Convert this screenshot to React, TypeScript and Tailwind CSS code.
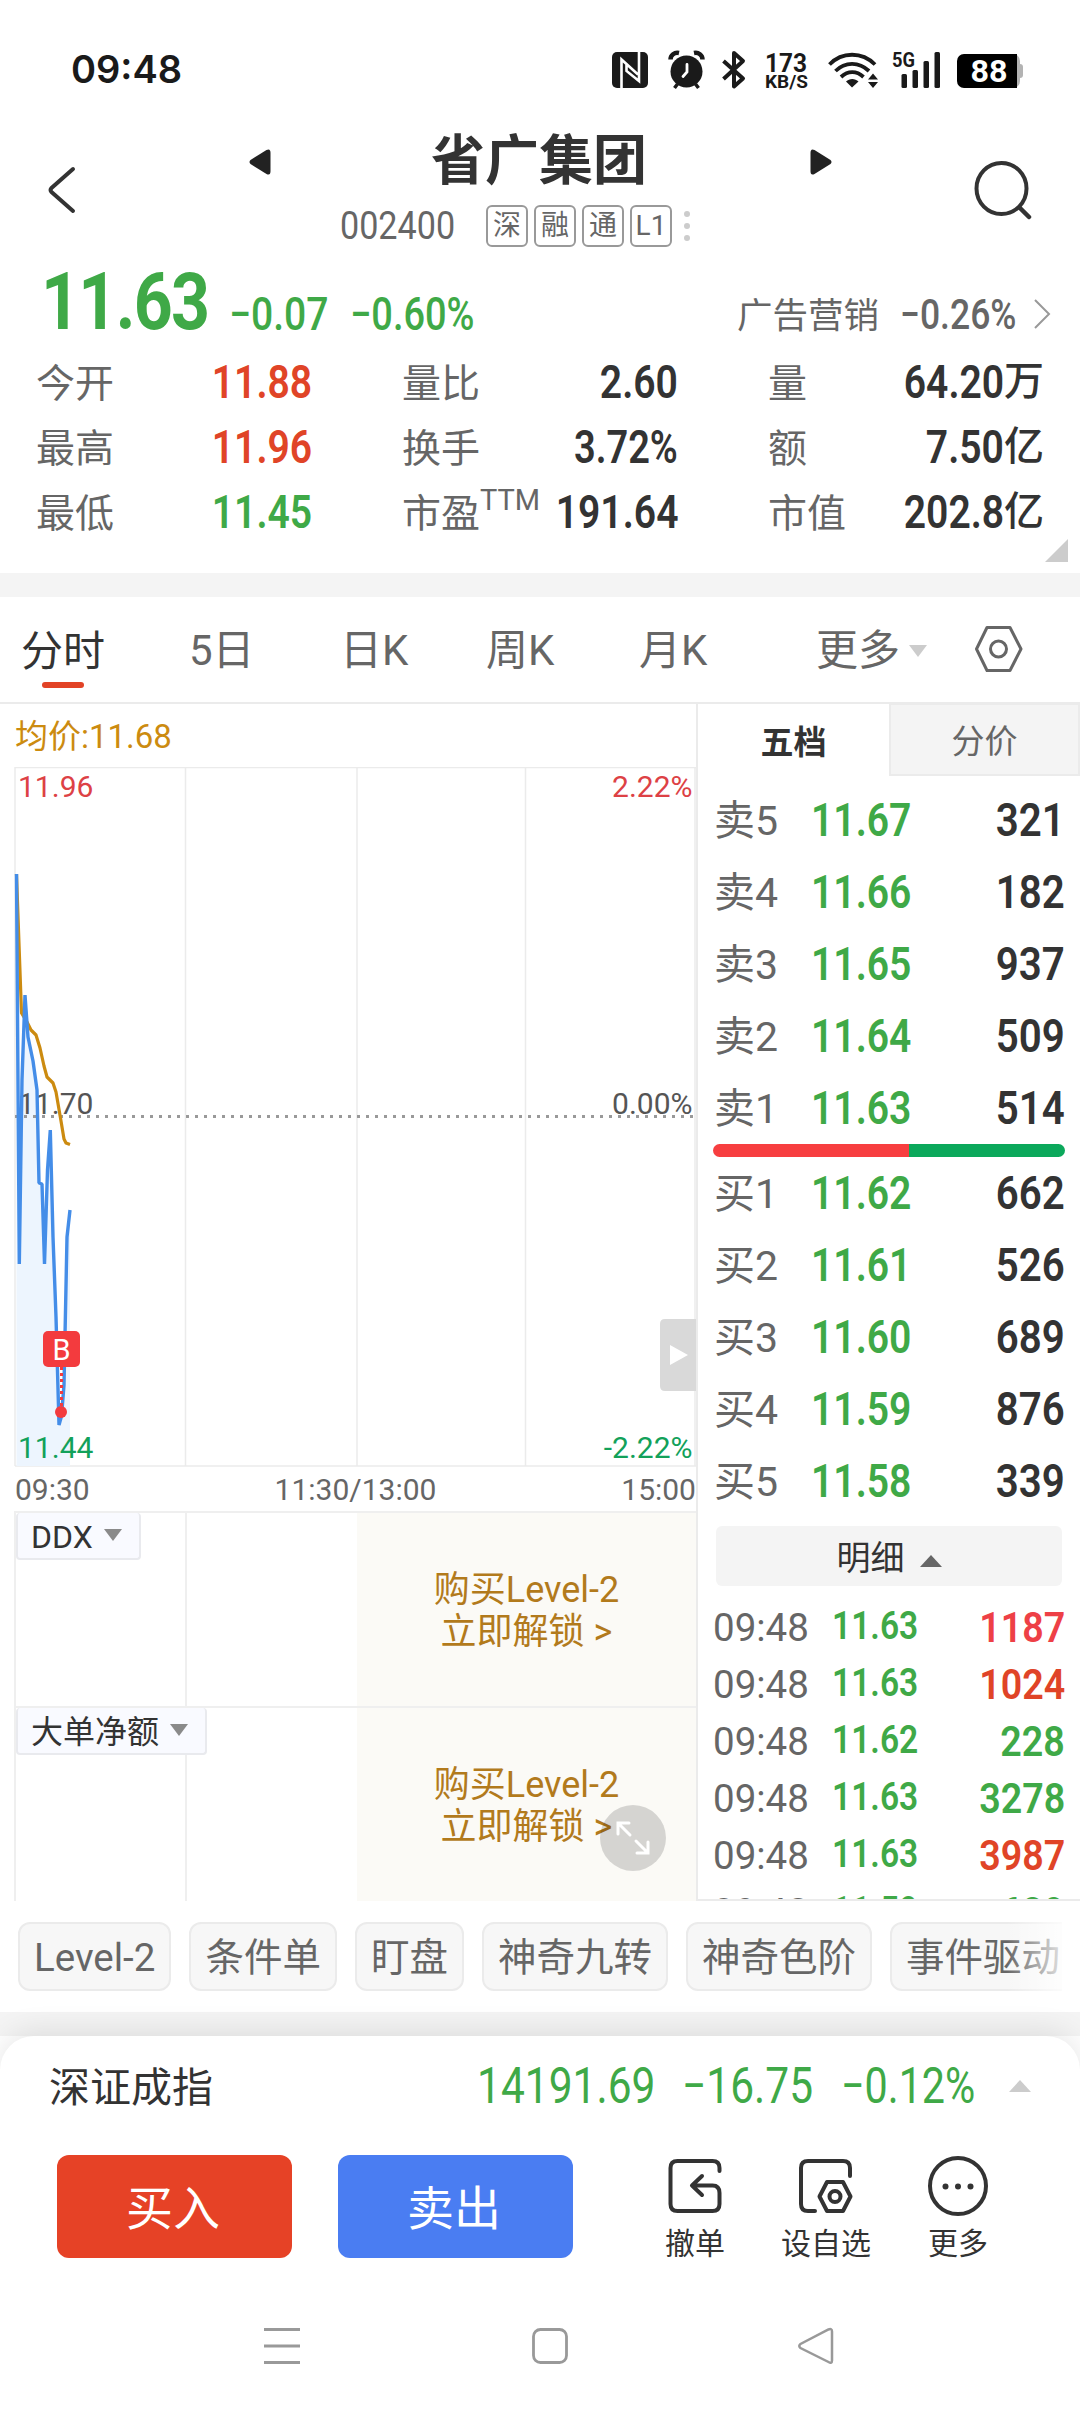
const stats = [
    [
        { label: '今开', value: '11.88', color: 'text-[#e04427]' },
        { label: '最高', value: '11.96', color: 'text-[#e04427]' },
        { label: '最低', value: '11.45', color: 'text-[#3fa947]' },
    ],
    [
        { label: '量比', value: '2.60', color: 'text-[#333]' },
        { label: '换手', value: '3.72%', color: 'text-[#333]' },
        { label: '市盈', sup: 'TTM', value: '191.64', color: 'text-[#333]' },
    ],
    [
        { label: '量', value: '64.20', unit: '万', color: 'text-[#333]' },
        { label: '额', value: '7.50', unit: '亿', color: 'text-[#333]' },
        { label: '市值', value: '202.8', unit: '亿', color: 'text-[#333]' },
    ],
];

const sells = [
    ['卖5', '11.67', '321'],
    ['卖4', '11.66', '182'],
    ['卖3', '11.65', '937'],
    ['卖2', '11.64', '509'],
    ['卖1', '11.63', '514'],
];

const buys = [
    ['买1', '11.62', '662'],
    ['买2', '11.61', '526'],
    ['买3', '11.60', '689'],
    ['买4', '11.59', '876'],
    ['买5', '11.58', '339'],
];

const ticks = [
    { price: '11.63', qty: '1187', color: 'text-[#ee4046]' },
    { price: '11.63', qty: '1024', color: 'text-[#e04427]' },
    { price: '11.62', qty: '228', color: 'text-[#3fa947]' },
    { price: '11.63', qty: '3278', color: 'text-[#3fa947]' },
    { price: '11.63', qty: '3987', color: 'text-[#e04427]' },
    { price: '11.59', qty: '689', color: 'text-[#3fa947]' },
];

const chips = ['Level-2', '条件单', '盯盘', '神奇九转', '神奇色阶', '事件驱动'];

// condensed digits for prices and volumes
const Num = ({ className = '', children }: { className?: string; children: string }) => {
    let scale = 'scale-x-[.875]';
    if (children.includes('.')) scale = 'scale-x-[.85]';
    if (children.includes('%')) scale = 'scale-x-[.825]';
    return <span className={`inline-block leading-none whitespace-nowrap ${scale} ${className}`}>{children}</span>;
};

const StatusBar = () => {
    return (
        <div className="flex h-[128px] items-center pt-3 pl-[71px] text-[#1a1a1a]">
            <span className="w-[541px] pb-[2px] text-[38px] leading-none font-semibold [font-family:Inter,sans-serif]">09:48</span>
            <svg width="412" height="80" viewBox="612 30 412 80" className="[font-family:Roboto,sans-serif]">
                {/* nfc */}
                <rect x="612" y="52" width="36" height="36" rx="5" fill="#1a1a1a" />
                <path d="M621.5 88V59.5L638 74.5M639 52V81L626.5 71V64.5" stroke="#fff" strokeWidth="2.6" fill="none" />
                {/* alarm */}
                <circle cx="686.5" cy="71.5" r="16" fill="#1a1a1a" />
                <path d="M679 53C674.5 52 670.5 55 670.5 59.5M694 53C698.5 52 702.5 55 702.5 59.5" stroke="#1a1a1a" strokeWidth="4.5" fill="none" />
                <path d="M677.5 84L674.5 88M695.5 84L698.5 88" stroke="#1a1a1a" strokeWidth="3.5" />
                <path d="M687 64.5V72L683 76.5" stroke="#fff" strokeWidth="2.8" fill="none" strokeLinecap="round" />
                {/* bluetooth */}
                <path d="M723.5 61L743 78.5L734 86.5V53L743 61L723.5 79" stroke="#1a1a1a" strokeWidth="4" fill="none" strokeLinejoin="round" />
                <text x="786" y="71.5" fontSize="26" fontWeight="700" textAnchor="middle" textLength="42" lengthAdjust="spacingAndGlyphs" fill="#1a1a1a">173</text>
                <text x="786.5" y="88" fontSize="18" fontWeight="700" textAnchor="middle" textLength="43" lengthAdjust="spacingAndGlyphs" fill="#1a1a1a">KB/S</text>
                {/* wifi */}
                <path d="M829.5 64.5C842 51.5 862 51.5 875 64.5M835.5 71C845 61.5 859 61.5 869 71M841 77C848 70.5 856.5 70.5 863.5 77" stroke="#1a1a1a" strokeWidth="3.8" fill="none" />
                <path d="M846 81.5C849.5 78 855 78 858.5 81.5L852 87.5Z" fill="#1a1a1a" />
                <path d="M868 79.5L873 73.5L878 79.5ZM868 82L873 88L878 82Z" fill="#1a1a1a" />
                {/* signal */}
                <text x="892" y="67" fontSize="21" fontWeight="700" textLength="23" lengthAdjust="spacingAndGlyphs" fill="#1a1a1a">5G</text>
                <rect x="901.5" y="74" width="5.5" height="14" rx="1.5" fill="#1a1a1a" />
                <rect x="912.5" y="70" width="5.5" height="18" rx="1.5" fill="#1a1a1a" />
                <rect x="923.5" y="61" width="5.5" height="27" rx="1.5" fill="#1a1a1a" />
                <rect x="934.5" y="52" width="5.5" height="36" rx="1.5" fill="#1a1a1a" />
                {/* battery */}
                <rect x="1000" y="54" width="20" height="34" rx="7" fill="#b3b3b3" />
                <rect x="1015" y="64" width="8" height="14" rx="3" fill="#b3b3b3" />
                <path d="M964 54H1017V88H964A7 7 0 0 1 957 81V61A7 7 0 0 1 964 54Z" fill="#000" />
                <text x="989" y="82" fontSize="31" fontWeight="700" textAnchor="middle" textLength="37" lengthAdjust="spacingAndGlyphs" fill="#fff">88</text>
            </svg>
        </div>
    );
};

const Header = () => {
    return (
        <div className="flex h-[124px] items-start pl-[46px]">
            <svg width="32" height="52" viewBox="0 0 32 52" className="mt-9">
                <path d="M27 5L5.5 24Q3.5 26 5.5 28L27 47" stroke="#333" strokeWidth="4" fill="none" strokeLinecap="round" />
            </svg>
            <svg width="22" height="26" viewBox="0 0 22 26" className="mt-[21px] ml-[171px]">
                <path d="M21.5 4V22Q21.5 27 17.5 25L1.5 15Q-0.5 13 1.5 11L17.5 1Q21.5 -1 21.5 4Z" fill="#222" />
            </svg>
            <div className="ml-[69px] w-[351px]">
                <h1 className="mt-[7px] ml-[91px] text-[54px] leading-[54px] font-bold text-[#333]">省广集团</h1>
                <div className="mt-[15px] flex h-[44px] items-center">
                    <span className="w-[146px] text-[#666]"><Num className="origin-left text-[39px]">002400</Num></span>
                    <div className="flex gap-[6px]">
                        {['深', '融', '通', 'L1'].map((tag) => (
                            <span key={tag} className="flex h-[42px] w-[42px] items-center justify-center rounded-md border-2 border-[#999] text-[28px] leading-none text-[#666]">{tag}</span>
                        ))}
                    </div>
                    <div className="ml-[12px] flex flex-col gap-[6px]">
                        <i className="size-[6px] rounded-full bg-[#ccc]" />
                        <i className="size-[6px] rounded-full bg-[#ccc]" />
                        <i className="size-[6px] rounded-full bg-[#ccc]" />
                    </div>
                </div>
            </div>
            <svg width="22" height="26" viewBox="0 0 22 26" className="mt-[21px] ml-[119px]">
                <path d="M0.5 4V22Q0.5 27 4.5 25L20.5 15Q22.5 13 20.5 11L4.5 1Q0.5 -1 0.5 4Z" fill="#222" />
            </svg>
            <svg width="60" height="62" viewBox="971 159 60 62" className="mt-[31px] ml-[140px]">
                <ellipse cx="1000.5" cy="188.5" rx="25" ry="25.5" stroke="#333" strokeWidth="4" fill="none" />
                <path d="M1019 208L1028 217" stroke="#333" strokeWidth="4.5" strokeLinecap="round" />
            </svg>
        </div>
    );
};

const Quote = () => {
    return (
        <div className="relative h-[321px]">
            <div className="flex h-[97px] items-center text-[#3fa947]">
                <span className="ml-[41px] w-[188px] pt-[3px]"><Num className="origin-left text-[80px] font-bold tracking-[-2px]">11.63</Num></span>
                <span className="mt-[26px] w-[121px]"><Num className="origin-left text-[46px] font-medium">−0.07</Num></span>
                <span className="mt-[26px] w-[387px]"><Num className="origin-left text-[46px] font-medium">−0.60%</Num></span>
                <span className="mt-[32px] w-[163px] text-[35.5px] leading-none text-[#666]">广告营销</span>
                <span className="mt-[27px] w-[132px] text-[#666]"><Num className="origin-left text-[43px] font-medium">−0.26%</Num></span>
                <svg width="20" height="32" viewBox="0 0 20 32" className="mt-[27px]">
                    <path d="M3 2L17 16L3 30" stroke="#999" strokeWidth="2" fill="none" />
                </svg>
            </div>
            <div className="flex justify-between pr-[36px] pl-[36px]">
                {stats.map((col, i) => (
                    <div key={i} className="w-[276px]">
                        {col.map((s) => (
                            <div key={s.label} className="flex h-[65px] items-center justify-between">
                                <span className="relative pt-[5px] text-[39px] leading-none text-[#666]">
                                    {s.label}
                                    {s.sup && <sup className="absolute -top-[4px] left-full text-[29px] leading-none">{s.sup}</sup>}
                                </span>
                                <span className={`flex items-center ${s.color}`}>
                                    <Num className="origin-right text-[46px] font-semibold">{s.value}</Num>
                                    {s.unit && <span className="text-[40px] leading-none font-medium">{s.unit}</span>}
                                </span>
                            </div>
                        ))}
                    </div>
                ))}
            </div>
            <svg width="23" height="23" viewBox="0 0 23 23" className="absolute right-[12px] bottom-[11px]">
                <path d="M23 0V23H0Z" fill="#ccc" />
            </svg>
        </div>
    );
};

const Tabs = () => {
    return (
        <div className="flex h-[107px] items-center border-b-2 border-[#ebebeb] pt-[3px] text-[42px] leading-none text-[#666]">
            <div className="ml-[21px] flex w-[168px] flex-col items-start pt-[17px] text-[#333]">
                分时
                <i className="mt-[9px] ml-[21px] h-[6px] w-[42px] rounded-full bg-[#e24326]" />
            </div>
            <span className="w-[151px]">5日</span>
            <span className="w-[146px]">日K</span>
            <span className="w-[153px]">周K</span>
            <span className="w-[177px]">月K</span>
            <span>更多</span>
            <svg width="18" height="12" viewBox="0 0 18 12" className="ml-[9px]">
                <path d="M0 0H18L9 12Z" fill="#ccc" />
            </svg>
            <svg width="50" height="50" viewBox="974 624 50 50" className="-mt-[5px] ml-[47px]">
                <path d="M987 627.5H1010L1021 649L1010 670.5H987L976.5 649Z" stroke="#666" strokeWidth="3" fill="none" strokeLinejoin="round" />
                <circle cx="998.5" cy="649" r="8" stroke="#666" strokeWidth="3" fill="none" />
            </svg>
        </div>
    );
};

const PriceChart = () => {
    return (
        <svg width="696" height="700" viewBox="0 767 696 700" className="block text-[30px]">
            <path d="M15 767.5H696M15 1466H696M15 767V1466M185.5 767V1466M357 767V1466M525.5 767V1466M695 767V1466" stroke="#ebebeb" strokeWidth="1.5" />
            <path d="M16.5 874L19.3 1264L22 1080L25 995L28 1037L33 1061L37 1090L39 1183L42 1184L44.5 1264L47.5 1170L50.3 1130L53 1237L56 1317L59 1425L61.5 1416L64 1385L67 1237L70 1210V1466H16.5Z" fill="#edf5fe" />
            <text x="18" y="797" fill="#dd4145">11.96</text>
            <text x="692.5" y="797" textAnchor="end" fill="#dd4145">2.22%</text>
            <text x="18" y="1114" fill="#555">11.70</text>
            <text x="692.5" y="1114" textAnchor="end" fill="#555">0.00%</text>
            <text x="18" y="1458" fill="#12a15a">11.44</text>
            <text x="692.5" y="1458" textAnchor="end" fill="#12a15a">-2.22%</text>
            <path d="M15 1116.5H696" stroke="#999" strokeWidth="3" strokeDasharray="3 6" />
            <path d="M16.5 874L19 944L21.5 1013L27 1022L31 1030L36 1035L40 1048L44 1066L47 1077L53 1083L56 1092L61 1121L64 1139L66 1143L70 1144.5" stroke="#cc8b10" strokeWidth="3.2" fill="none" strokeLinejoin="round" />
            <path d="M16.5 874L19.3 1264L22 1080L25 995L28 1037L33 1061L37 1090L39 1183L42 1184L44.5 1264L47.5 1170L50.3 1130L53 1237L56 1317L59 1425L61.5 1416L64 1385L67 1237L70 1210" stroke="#448de8" strokeWidth="3.4" fill="none" strokeLinejoin="bevel" />
            <path d="M61.5 1367V1408" stroke="#f33b3e" strokeWidth="3" strokeDasharray="3 3" />
            <circle cx="61" cy="1412" r="6" fill="#f33b3e" />
            <rect x="43" y="1331" width="37" height="36" rx="5" fill="#f33b3e" />
            <text x="61.5" y="1360" fontSize="29" textAnchor="middle" fill="#fff">B</text>
            <path d="M665 1319H696V1391H665Q660 1391 660 1386V1324Q660 1319 665 1319Z" fill="#d9d9d9" />
            <path d="M670 1345L688 1355L670 1365Z" fill="#fff" />
        </svg>
    );
};

const SubPanel = ({ name }: { name: string }) => {
    return (
        <div className="ml-[14px] flex h-[195px] border-t-2 border-[#efefef]">
            <div className="w-[343px] border-l-2 border-[#efefef]">
                <div className="flex h-full w-[171px] items-start border-r-2 border-[#efefef]">
                    <div className="flex h-[47px] shrink-0 items-center gap-[11px] rounded-sm border-2 border-t-0 border-[#e9eaee] bg-[#f9faff] pt-[2px] pr-[17px] pl-[13px] text-[32px] leading-none whitespace-nowrap text-[#333]">
                        {name}
                        <svg width="18" height="12" viewBox="0 0 18 12" className="-mt-1">
                            <path d="M0 0H18L9 12Z" fill="#8a8a8a" />
                        </svg>
                    </div>
                </div>
            </div>
            <div className="flex flex-1 flex-col items-center justify-center bg-[#fbfaf6] pt-[3px] text-[36px] leading-[42px] text-[#b27a1c]">
                <span>购买Level-2</span>
                <span>立即解锁 &gt;</span>
            </div>
        </div>
    );
};

const OrderRow = ({ row }: { row: string[] }) => {
    return (
        <div className="flex h-[72px] items-center">
            <span className="w-[97px] pt-[3px] text-[41px] leading-none text-[#666]">{row[0]}</span>
            <Num className="origin-left text-[46px] font-semibold text-[#3fa947]">{row[1]}</Num>
            <Num className="ml-auto origin-right text-[46px] font-semibold text-[#333]">{row[2]}</Num>
        </div>
    );
};

const OrderBook = () => {
    return (
        <div className="flex-1 overflow-hidden border-b-2 border-l-2 border-[#ebebeb]">
            <div className="flex h-[72px] text-[33px] leading-none">
                <div className="flex w-[191px] items-center justify-center pt-1 font-bold text-[#333]">五档</div>
                <div className="flex flex-1 items-center justify-center border-2 border-t-1 border-[#ebebeb] bg-[#f4f4f4] pt-1 text-[#666]">分价</div>
            </div>
            <div className="pt-[8px] pr-[15px] pl-[16px]">
                {sells.map((row) => <OrderRow key={row[0]} row={row} />)}
                <div className="-ml-px flex h-[13px] overflow-hidden rounded-full">
                    <div className="w-[196px] bg-[#f73e40]" />
                    <div className="flex-1 bg-[#0ba85b]" />
                </div>
                {buys.map((row) => <OrderRow key={row[0]} row={row} />)}
            </div>
            <div className="mt-[9px] mr-[18px] ml-[18px] flex h-[60px] items-center justify-center gap-[15px] rounded-md bg-[#f4f4f4] pt-[3px] text-[34px] leading-none text-[#333]">
                明细
                <svg width="22" height="12" viewBox="0 0 22 12" className="mt-[6px]">
                    <path d="M11 0L22 12H0Z" fill="#666" />
                </svg>
            </div>
            <div className="mt-[13px] pr-[15px] pl-[15px]">
                {ticks.map((t, i) => (
                    <div key={i} className="flex h-[57px] items-center">
                        <span className="mt-[2px] w-[119px] text-[38.5px] leading-none text-[#666]">09:48</span>
                        <Num className="-mt-[3px] origin-left text-[39.5px] font-semibold text-[#3fa947]">{t.price}</Num>
                        <Num className={`-mt-px ml-auto origin-right text-[43px] font-semibold ${t.color}`}>{t.qty}</Num>
                    </div>
                ))}
            </div>
        </div>
    );
};

const BottomBar = () => {
    return (
        <div className="relative h-[376px] rounded-t-[34px] bg-white shadow-[0_-4px_30px_rgba(0,0,0,0.1)]">
            <div className="flex h-[100px] items-center text-[#3fa947]">
                <span className="ml-[49px] w-[428px] pt-[4px] text-[41px] leading-none text-[#333]">深证成指</span>
                <span className="w-[205px]"><Num className="origin-left text-[50px]">14191.69</Num></span>
                <span className="w-[159px]"><Num className="origin-left text-[50px]">−16.75</Num></span>
                <span className="w-[168px]"><Num className="origin-left text-[50px]">−0.12%</Num></span>
                <svg width="22" height="12" viewBox="0 0 22 12">
                    <path d="M11 0L22 12H0Z" fill="#ccc" />
                </svg>
            </div>
            <div className="mt-[19px] flex h-[103px] items-center text-[47px] leading-none text-white">
                <div className="ml-[57px] flex h-full w-[235px] items-center justify-center rounded-xl bg-[#e64226] pt-1 pr-[3px]">买入</div>
                <div className="ml-[46px] flex h-full w-[235px] items-center justify-center rounded-xl bg-[#4a7df2] pt-1 pr-[3px]">卖出</div>
                <div className="ml-[77px] flex h-[104px] w-[90px] flex-col items-center gap-[12px] text-[30px] text-[#333]">
                    <svg width="62" height="62" viewBox="664 2155 62 62" fill="none" stroke="#333" strokeWidth="4" strokeLinecap="round" strokeLinejoin="round" className="shrink-0">
                        <path d="M719.5 2171V2168Q719.5 2161 712.5 2161H677.5Q670.5 2161 670.5 2168V2204Q670.5 2211 677.5 2211H712.5Q719.5 2211 719.5 2204V2193Q719.5 2185.5 712.5 2185.5H692M702 2176L692 2185.5L702 2195" />
                    </svg>
                    撤单
                </div>
                <div className="ml-[36px] flex h-[104px] w-[100px] flex-col items-center gap-[12px] text-[30px] text-[#333]">
                    <svg width="62" height="62" viewBox="795 2155 62 62" fill="none" stroke="#333" strokeWidth="4" strokeLinecap="round" strokeLinejoin="round" className="shrink-0">
                        <path d="M850 2176V2168Q850 2161 843 2161H808Q801 2161 801 2168V2204Q801 2211 808 2211H815" />
                        <path d="M827 2182H843L850.5 2196.5L843 2211H827L819.5 2196.5Z" />
                        <circle cx="835" cy="2196.5" r="5.5" />
                    </svg>
                    设自选
                </div>
                <div className="ml-[36px] flex h-[104px] w-[92px] flex-col items-center gap-[12px] text-[30px] text-[#333]">
                    <svg width="62" height="62" viewBox="926.5 2155 62 62" className="shrink-0">
                        <circle cx="957.5" cy="2186" r="28" fill="none" stroke="#333" strokeWidth="4" />
                        <circle cx="945" cy="2186.5" r="3" fill="#333" />
                        <circle cx="957.5" cy="2186.5" r="3" fill="#333" />
                        <circle cx="970" cy="2186.5" r="3" fill="#333" />
                    </svg>
                    更多
                </div>
            </div>
            <div className="mt-[69px] flex items-center">
                <svg width="38" height="38" viewBox="0 0 38 38" className="ml-[263px]">
                    <path d="M1 2.5H37M1 19H37M1 35.5H37" stroke="#999" strokeWidth="2.8" />
                </svg>
                <svg width="38" height="38" viewBox="0 0 38 38" className="ml-[230px]">
                    <rect x="2.5" y="2.5" width="33" height="33" rx="7" stroke="#999" strokeWidth="2.8" fill="none" />
                </svg>
                <svg width="38" height="38" viewBox="0 0 38 38" className="ml-[228px]">
                    <path d="M31.5 2.5Q35 1 35 4.5V33.5Q35 37 31.5 35L3.5 21Q1 19 3.5 17Z" stroke="#999" strokeWidth="2.5" fill="none" />
                </svg>
            </div>
        </div>
    );
};

const App = () => {
    return (
        <div className="h-[2412px] w-[1080px] overflow-hidden bg-white [font-family:Roboto,'Noto_Sans_CJK_SC',sans-serif]">
            <StatusBar />
            <Header />
            <Quote />
            <div className="h-6 bg-[#f4f4f4]" />
            <Tabs />
            <div className="flex h-[1197px]">
                <div className="relative w-[696px]">
                    <div className="flex h-[63px] items-center pt-[2px] pl-[15px] text-[33px] leading-none text-[#cc8b10]">均价:11.68</div>
                    <PriceChart />
                    <div className="flex h-[44px] items-center justify-between pt-[2px] pl-[15px] text-[30px] leading-none text-[#666]">
                        <span>09:30</span>
                        <span>11:30/13:00</span>
                        <span>15:00</span>
                    </div>
                    <SubPanel name="DDX" />
                    <SubPanel name="大单净额" />
                    <div className="absolute right-[30px] bottom-[30px] flex size-[66px] items-center justify-center rounded-full bg-black/15">
                        <svg width="36" height="36" viewBox="0 0 36 36" fill="none" stroke="#fff" strokeWidth="3" strokeLinecap="round">
                            <path d="M3 14V3H14M4 4L15 15M33 22V33H22M32 32L21 21" />
                        </svg>
                    </div>
                </div>
                <OrderBook />
            </div>
            <div className="relative h-[111px] pt-[21px] pl-[18px]">
                <div className="flex w-[1044px] gap-[18px] overflow-hidden">
                    {chips.map((c) => (
                        <span key={c} className="flex h-[69px] shrink-0 items-center rounded-xl border-2 border-[#ebebeb] bg-[#f7f7f7] px-[14px] pt-1 text-[38.5px] leading-none text-[#666]">{c}</span>
                    ))}
                </div>
                <div className="absolute top-0 right-[18px] h-full w-[56px] bg-linear-to-r from-white/0 to-white/80" />
            </div>
            <div className="h-6 bg-[#f4f4f4]" />
            <BottomBar />
        </div>
    );
};

export default App;
